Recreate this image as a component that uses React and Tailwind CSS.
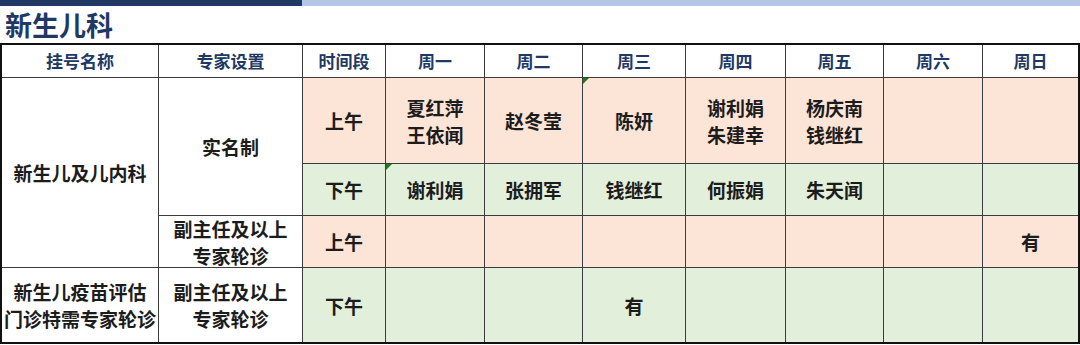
import React from "react";

const font = { fontFamily: '"Noto Sans CJK SC", "Noto Sans", sans-serif' };

function Cell({ children, className = "", tri = false }) {
  return (
    <div className={`relative flex items-center justify-center text-center ${className}`}>
      {tri && (
        <div className="absolute left-0 top-0 w-0 h-0 border-t-[6px] border-t-[#1f7a1f] border-r-[6px] border-r-transparent" />
      )}
      {children}
    </div>
  );
}

const P = "bg-[#fce4d6]";
const G = "bg-[#e2efda]";
const W = "bg-white";
const body = "text-[19px] font-bold text-[#1c1c1c] leading-[27px]";

export default function App() {
  const days = ["周一", "周二", "周三", "周四", "周五", "周六", "周日"];
  const am = [["夏红萍", "王依闻"], ["赵冬莹"], ["陈妍"], ["谢利娟", "朱建幸"], ["杨庆南", "钱继红"], [], []];
  const pm = ["谢利娟", "张拥军", "钱继红", "何振娟", "朱天闻", "", ""];
  return (
    <div className="w-[1080px] h-[345px] bg-white overflow-hidden" style={font}>
      <div className="flex h-[6px]">
        <div className="w-[302px] bg-[#1f3864]" />
        <div className="flex-1 bg-[#b4c6e7]" />
      </div>
      <div className="h-[37px] pl-[5px] text-[27px] leading-[37px] font-bold text-[#1f3864]">新生儿科</div>
      <div
        className="grid gap-px bg-[#3c3c3c] border-2 border-[#111] w-[1080px]"
        style={{
          gridTemplateColumns: "156px 143px 82px 98px 97px 102px 99px 97px 98px 95px",
          gridTemplateRows: "32px 85px 51px 51px 74px",
        }}
      >
        {["挂号名称", "专家设置", "时间段", ...days].map((h) => (
          <Cell key={h} className={`${W} text-[17px] font-bold text-[#203864]`}>{h}</Cell>
        ))}

        <Cell className={`${W} ${body} row-span-3`}>新生儿及儿内科</Cell>
        <Cell className={`${W} ${body} row-span-2`}>实名制</Cell>
        <Cell className={`${P} ${body}`}>上午</Cell>
        {am.map((n, i) => (
          <Cell key={"am" + i} className={`${P} ${body}`} tri={i === 2}>
            <div>{n.map((x) => <div key={x}>{x}</div>)}</div>
          </Cell>
        ))}

        <Cell className={`${G} ${body}`}>下午</Cell>
        {pm.map((n, i) => (
          <Cell key={"pm" + i} className={`${G} ${body}`} tri={i === 0}>{n}</Cell>
        ))}

        <Cell className={`${W} ${body} leading-[25px]`}>
          <div><div>副主任及以上</div><div>专家轮诊</div></div>
        </Cell>
        <Cell className={`${P} ${body}`}>上午</Cell>
        {days.map((d, i) => (
          <Cell key={"r4" + i} className={`${P} ${body}`}>{i === 6 ? "有" : ""}</Cell>
        ))}

        <Cell className={`${W} ${body} leading-[25px]`}>
          <div><div>新生儿疫苗评估</div><div>门诊特需专家轮诊</div></div>
        </Cell>
        <Cell className={`${W} ${body} leading-[25px]`}>
          <div><div>副主任及以上</div><div>专家轮诊</div></div>
        </Cell>
        <Cell className={`${G} ${body}`}>下午</Cell>
        {days.map((d, i) => (
          <Cell key={"r5" + i} className={`${G} ${body}`}>{i === 2 ? "有" : ""}</Cell>
        ))}
      </div>
    </div>
  );
}
